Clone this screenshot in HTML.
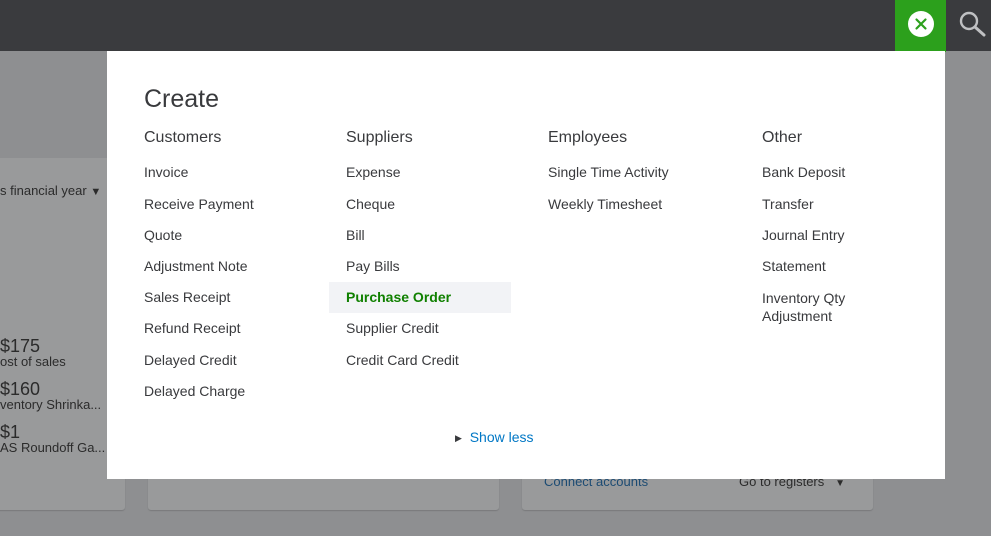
<!DOCTYPE html>
<html><head><meta charset="utf-8"><style>
*{margin:0;padding:0;box-sizing:border-box}
body{width:991px;height:536px;overflow:hidden;background:#8e8f91;font-family:"Liberation Sans",Arial,sans-serif;position:relative}
.top{position:absolute;left:0;top:0;width:991px;height:51px;background:#3a3b3e}
.band{position:absolute;left:0;top:51px;width:991px;height:108px;background:#8e8f91}
.card{position:absolute;background:#999a9b;border-radius:3px;box-shadow:0 1px 1px #7a7a7c}
.g{position:absolute;color:#2b2b2b;white-space:nowrap}
.modal{position:absolute;left:107px;top:51px;width:838px;height:428px;background:#fff}
.t{position:absolute;font-size:14px;color:#393a3d;white-space:nowrap}
.h{position:absolute;font-size:16px;color:#393a3d}
.hl{position:absolute;left:222px;top:231px;width:182px;height:31px;background:#f2f3f6}
</style></head><body>
<div class="top"></div>
<div class="card" style="left:-5px;top:158px;width:130px;height:352px"></div>
<div class="card" style="left:148px;top:440px;width:351px;height:70px"></div>
<div class="card" style="left:522px;top:440px;width:351px;height:70px"></div>
<div class="g" style="left:0;top:183px;font-size:13px">s financial year <span style="font-size:11px">▼</span></div>
<div class="g" style="left:0;top:336px;font-size:18px">$175</div>
<div class="g" style="left:0;top:354px;font-size:13px">ost of sales</div>
<div class="g" style="left:0;top:379px;font-size:18px">$160</div>
<div class="g" style="left:0;top:397px;font-size:13px">ventory Shrinka...</div>
<div class="g" style="left:0;top:422px;font-size:18px">$1</div>
<div class="g" style="left:0;top:440px;font-size:13px">AS Roundoff Ga...</div>
<div class="g" style="left:544px;top:474px;font-size:13px;color:#1c4b73">Connect accounts</div>
<div class="g" style="left:739px;top:474px;font-size:13px">Go to registers &nbsp; <span style="font-size:10px">▼</span></div>
<div style="position:absolute;left:895px;top:0;width:51px;height:52px;background:#2ca01c"></div>
<div style="position:absolute;left:895px;top:50px;width:51px;height:6px;background:#2ca01c;clip-path:polygon(0 0,100% 0,100% 20%,50% 100%,0 20%)"></div>
<svg style="position:absolute;left:907px;top:10px" width="28" height="28" viewBox="0 0 28 28"><circle cx="14" cy="14" r="13" fill="#fff"/><path d="M9.5 9.5L18.5 18.5M18.5 9.5L9.5 18.5" stroke="#2ca01c" stroke-width="2.2" stroke-linecap="round"/></svg>
<svg style="position:absolute;left:958px;top:10px" width="30" height="28" viewBox="0 0 30 28"><circle cx="11" cy="11" r="8" fill="none" stroke="#bfc0c2" stroke-width="2.4"/><path d="M17 17L26 25" stroke="#bfc0c2" stroke-width="3" stroke-linecap="round"/></svg>
<div class="modal">
<div style="position:absolute;left:37px;top:34px;font-size:25px;color:#393a3d">Create</div>
<div class="hl"></div>
<div class="h" style="left:37px;top:78px">Customers</div>
<div class="h" style="left:239px;top:78px">Suppliers</div>
<div class="h" style="left:441px;top:78px">Employees</div>
<div class="h" style="left:655px;top:78px">Other</div>
<div class="t" style="left:37px;top:113px">Invoice</div>
<div class="t" style="left:37px;top:145px">Receive Payment</div>
<div class="t" style="left:37px;top:176px">Quote</div>
<div class="t" style="left:37px;top:207px">Adjustment Note</div>
<div class="t" style="left:37px;top:238px">Sales Receipt</div>
<div class="t" style="left:37px;top:269px">Refund Receipt</div>
<div class="t" style="left:37px;top:301px">Delayed Credit</div>
<div class="t" style="left:37px;top:332px">Delayed Charge</div>
<div class="t" style="left:239px;top:113px">Expense</div>
<div class="t" style="left:239px;top:145px">Cheque</div>
<div class="t" style="left:239px;top:176px">Bill</div>
<div class="t" style="left:239px;top:207px">Pay Bills</div>
<div class="t" style="left:239px;top:238px;color:#108000;font-weight:bold">Purchase Order</div>
<div class="t" style="left:239px;top:269px">Supplier Credit</div>
<div class="t" style="left:239px;top:301px">Credit Card Credit</div>
<div class="t" style="left:441px;top:113px">Single Time Activity</div>
<div class="t" style="left:441px;top:145px">Weekly Timesheet</div>
<div class="t" style="left:655px;top:113px">Bank Deposit</div>
<div class="t" style="left:655px;top:145px">Transfer</div>
<div class="t" style="left:655px;top:176px">Journal Entry</div>
<div class="t" style="left:655px;top:207px">Statement</div>
<div class="t" style="left:655px;top:238px;line-height:18px">Inventory Qty<br>Adjustment</div>
<div class="t" style="left:348px;top:378px;color:#0077c5"><span style="font-size:9px;color:#393a3d;vertical-align:1px">▶</span>&nbsp; Show less</div>
</div>
</body></html>
